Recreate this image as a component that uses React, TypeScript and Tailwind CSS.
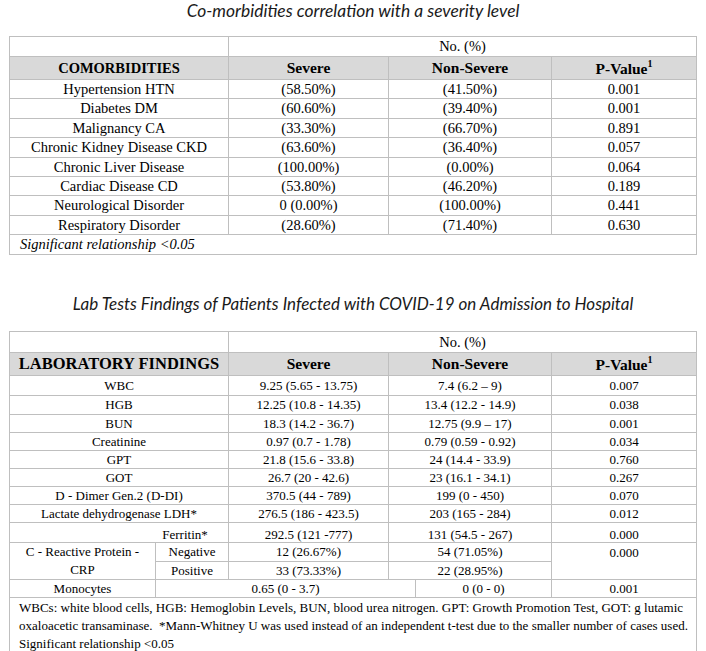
const cell = "border border-[#bfbfbf] p-0 text-center align-middle";

const comorbidities = [
  ["Hypertension HTN", "(58.50%)", "(41.50%)", "0.001"],
  ["Diabetes DM", "(60.60%)", "(39.40%)", "0.001"],
  ["Malignancy CA", "(33.30%)", "(66.70%)", "0.891"],
  ["Chronic Kidney Disease CKD", "(63.60%)", "(36.40%)", "0.057"],
  ["Chronic Liver Disease", "(100.00%)", "(0.00%)", "0.064"],
  ["Cardiac Disease CD", "(53.80%)", "(46.20%)", "0.189"],
  ["Neurological Disorder", "0 (0.00%)", "(100.00%)", "0.441"],
  ["Respiratory Disorder", "(28.60%)", "(71.40%)", "0.630"],
];

const labs = [
  ["WBC", "9.25 (5.65 - 13.75)", "7.4 (6.2 – 9)", "0.007", "h-[20px]"],
  ["HGB", "12.25 (10.8 - 14.35)", "13.4 (12.2 - 14.9)", "0.038", "h-[18.5px]"],
  ["BUN", "18.3 (14.2 - 36.7)", "12.75 (9.9 – 17)", "0.001", "h-[18px]"],
  ["Creatinine", "0.97 (0.7 - 1.78)", "0.79 (0.59 - 0.92)", "0.034", "h-[18px]"],
  ["GPT", "21.8 (15.6 - 33.8)", "24 (14.4 - 33.9)", "0.760", "h-[18px]"],
  ["GOT", "26.7 (20 - 42.6)", "23 (16.1 - 34.1)", "0.267", "h-[18px]"],
  ["D - Dimer Gen.2 (D-DI)", "370.5 (44 - 789)", "199 (0 - 450)", "0.070", "h-[18px]"],
  ["Lactate dehydrogenase LDH*", "276.5 (186 - 423.5)", "203 (165 - 284)", "0.012", "h-[18.5px]"],
];

function PValue() {
  return (
    <>
      P-Value<sup className="relative -top-[1px] text-[10px] align-super leading-none">1</sup>
    </>
  );
}

export default function App() {
  return (
    <div className="w-[706px] h-[651px] bg-white text-black">
      <h2 className="pt-[1px] h-[36px] text-center font-[family-name:Lato,sans-serif] text-[17.4px] italic font-normal leading-[20px] text-[#1a1a1a]">
        Co-morbidities correlation with a severity level
      </h2>

      <table className="ml-[9px] w-[687px] table-fixed border-collapse font-[family-name:Liberation_Serif,serif] text-[14.5px] leading-none">
        <colgroup>
          <col className="w-[219px]" />
          <col className="w-[160px]" />
          <col className="w-[163px]" />
          <col className="w-[145px]" />
        </colgroup>
        <tbody>
          <tr className="h-[20px]">
            <td className={cell}></td>
            <td className={cell} colSpan={3}>No. (%)</td>
          </tr>
          <tr className="h-[23px] bg-[#d9d9d9] font-bold">
            <td className={`${cell} text-[14.5px]`}>COMORBIDITIES</td>
            <td className={`${cell} text-[15.5px]`}>Severe</td>
            <td className={`${cell} text-[15.5px]`}>Non-Severe</td>
            <td className={`${cell} text-[15.5px]`}><PValue /></td>
          </tr>
          {comorbidities.map(([name, severe, nonSevere, p]) => (
            <tr className="h-[19.4px]" key={name}>
              <td className={cell}>{name}</td>
              <td className={cell}>{severe}</td>
              <td className={cell}>{nonSevere}</td>
              <td className={cell}>{p}</td>
            </tr>
          ))}
          <tr className="h-[20px]">
            <td className={`${cell} !text-left pl-[10px] italic`} colSpan={4}>
              Significant relationship &lt;0.05
            </td>
          </tr>
        </tbody>
      </table>

      <h2 className="mt-[39px] h-[37px] text-center font-[family-name:Lato,sans-serif] text-[17px] italic font-normal leading-[20px] text-[#1a1a1a]">
        Lab Tests Findings of Patients Infected with COVID-19 on Admission to Hospital
      </h2>

      <table className="ml-[9px] w-[687px] table-fixed border-collapse font-[family-name:Liberation_Serif,serif] text-[13px] leading-none">
        <colgroup>
          <col className="w-[146px]" />
          <col className="w-[73px]" />
          <col className="w-[160px]" />
          <col className="w-[27px]" />
          <col className="w-[136px]" />
          <col className="w-[145px]" />
        </colgroup>
        <tbody>
          <tr className="h-[21px]">
            <td className={cell} colSpan={2}></td>
            <td className={`${cell} text-[14.5px]`} colSpan={4}>No. (%)</td>
          </tr>
          <tr className="h-[23px] bg-[#d9d9d9] font-bold">
            <td className={`${cell} text-[16.5px]`} colSpan={2}>LABORATORY FINDINGS</td>
            <td className={`${cell} text-[15.5px]`}>Severe</td>
            <td className={`${cell} text-[15.5px]`} colSpan={2}>Non-Severe</td>
            <td className={`${cell} text-[15.5px]`}><PValue /></td>
          </tr>
          {labs.map(([name, severe, nonSevere, p, h]) => (
            <tr className={h} key={name}>
              <td className={cell} colSpan={2}>{name}</td>
              <td className={cell}>{severe}</td>
              <td className={cell} colSpan={2}>{nonSevere}</td>
              <td className={cell}>{p}</td>
            </tr>
          ))}
          <tr className="h-[20px]">
            <td className={`${cell} pl-[132px] pt-[3px]`} colSpan={2}>Ferritin*</td>
            <td className={`${cell} pt-[3px]`}>292.5 (121 -777)</td>
            <td className={`${cell} pt-[3px]`} colSpan={2}>131 (54.5 - 267)</td>
            <td className={`${cell} pt-[3px]`}>0.000</td>
          </tr>
          <tr className="h-[18px]">
            <td className={`${cell} leading-[18px]`} rowSpan={2}>
              C - Reactive Protein -<br />CRP
            </td>
            <td className={cell}>Negative</td>
            <td className={cell}>12 (26.67%)</td>
            <td className={cell} colSpan={2}>54 (71.05%)</td>
            <td className={`${cell} !align-top pt-[3px]`} rowSpan={2}>0.000</td>
          </tr>
          <tr className="h-[18px]">
            <td className={cell}>Positive</td>
            <td className={cell}>33 (73.33%)</td>
            <td className={cell} colSpan={2}>22 (28.95%)</td>
          </tr>
          <tr className="h-[18px]">
            <td className={cell}>Monocytes</td>
            <td className={cell} colSpan={3}>0.65 (0 - 3.7)</td>
            <td className={cell}>0 (0 - 0)</td>
            <td className={cell}>0.001</td>
          </tr>
          <tr>
            <td className={`${cell} !text-left pl-[9px] py-[1px] leading-[18px]`} colSpan={6}>
              <span className="block whitespace-nowrap">
                WBCs: white blood cells, HGB: Hemoglobin Levels, BUN, blood urea nitrogen. GPT: Growth Promotion Test, GOT: g lutamic
              </span>
              <span className="block whitespace-nowrap">
                oxaloacetic transaminase.{"\u00a0 "}*Mann-Whitney U was used instead of an independent t-test due to the smaller number of cases used.
              </span>
              <span className="block whitespace-nowrap">Significant relationship &lt;0.05</span>
            </td>
          </tr>
        </tbody>
      </table>
    </div>
  );
}
